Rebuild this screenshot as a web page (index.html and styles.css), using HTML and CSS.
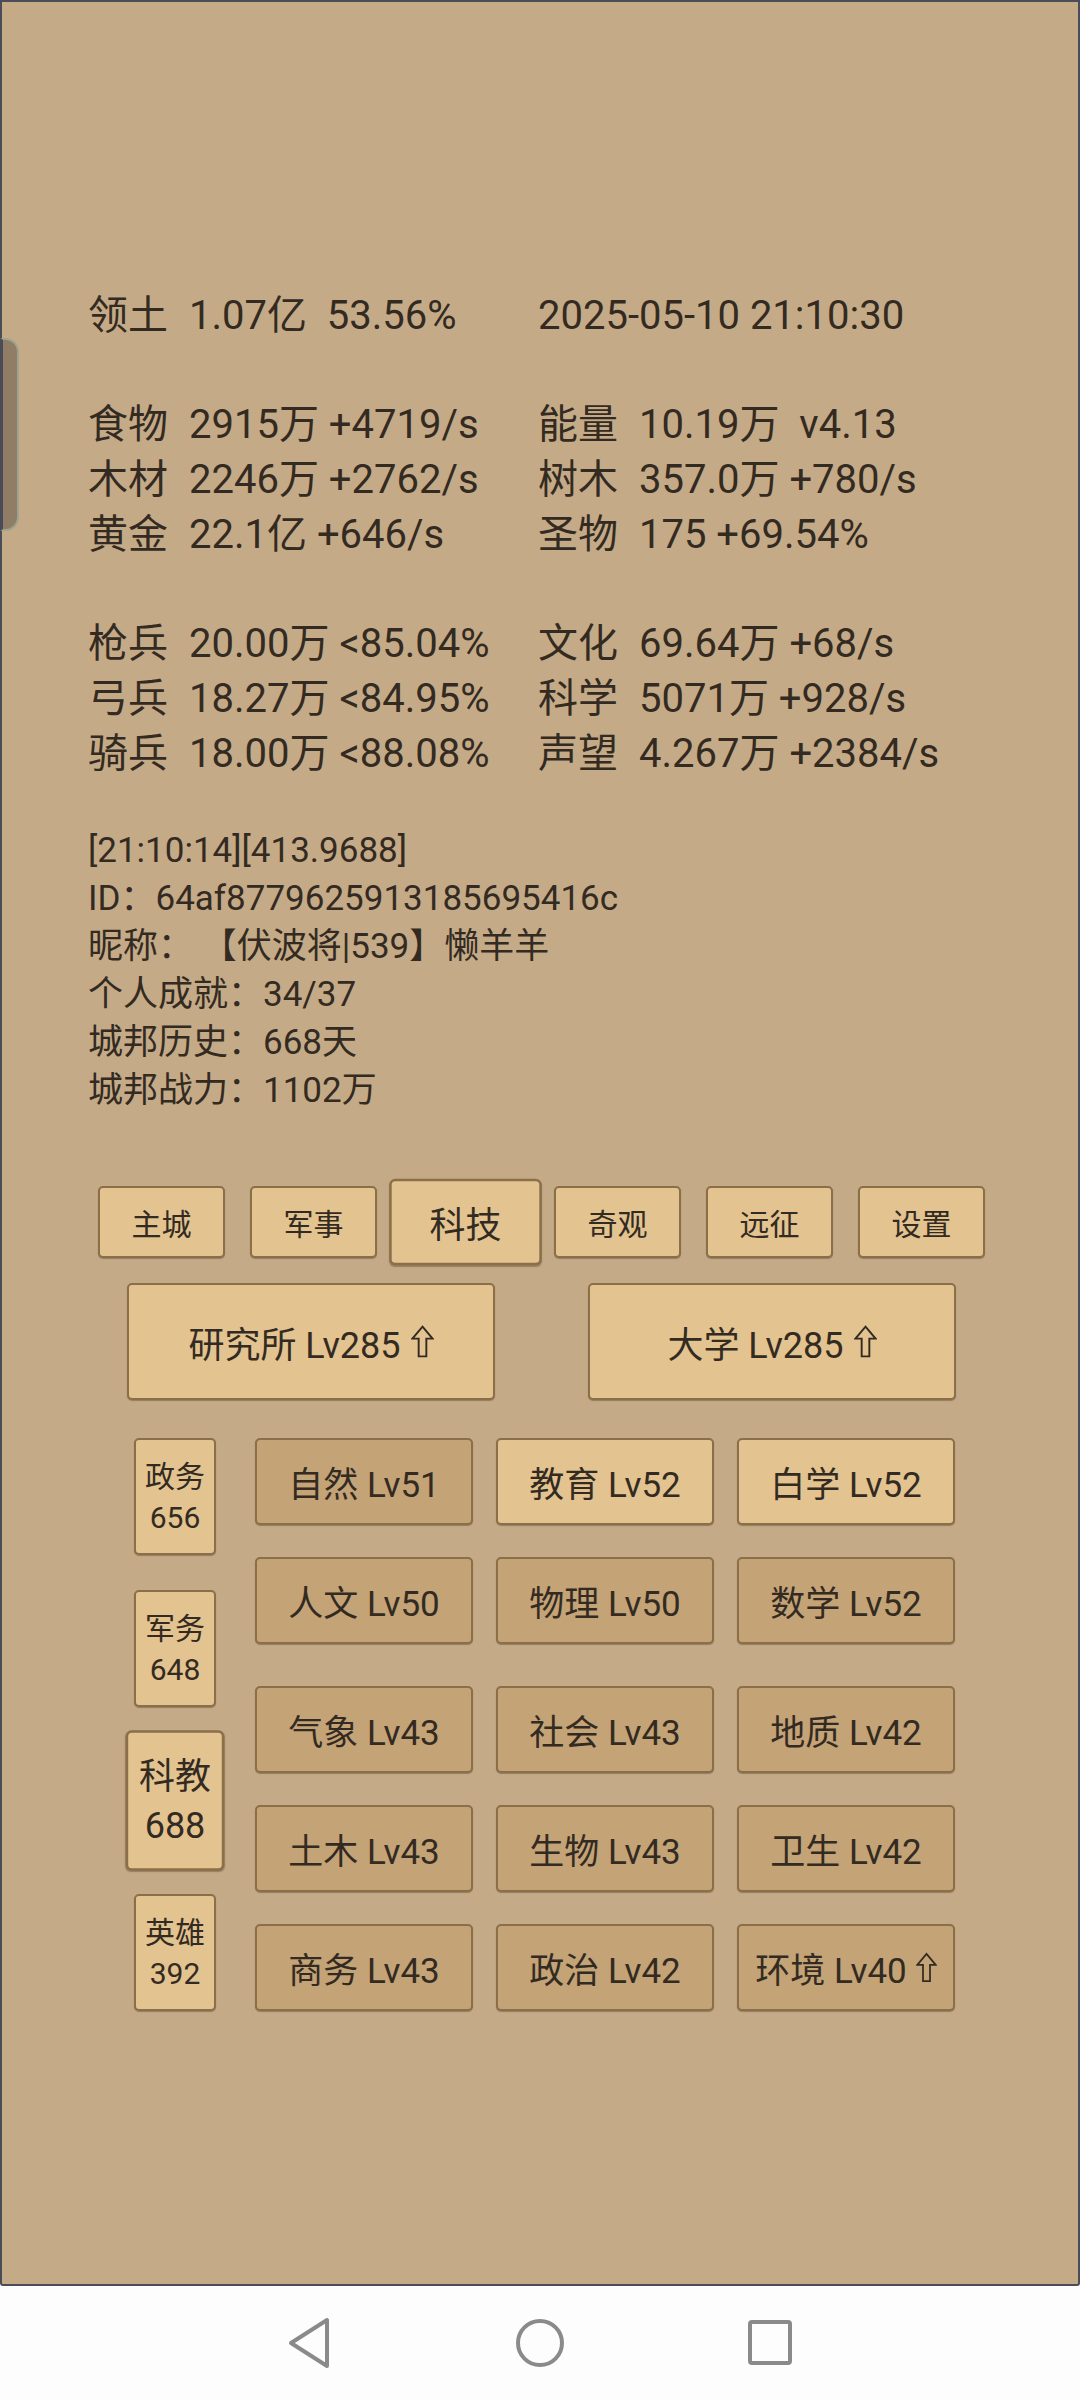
FILE: index.html
```html
<!DOCTYPE html>
<html lang="zh-CN">
<head>
    <meta charset="UTF-8">
    <meta name="viewport" content="width=device-width, initial-scale=1.0">
    <title>城邦 - 科技</title>
    <link rel="stylesheet" href="styles.css">
</head>
<body>
    <div class="panel">
        <div class="handle"></div>

        <div class="stats">
            <div class="stat-row">
                <span>领土</span><span class="pre">1.07亿  53.56%</span><span class="wide">2025-05-10 21:10:30</span>
            </div>
        </div>

        <div class="stats">
            <div class="stat-row">
                <span>食物</span><span>2915万 +4719/s</span><span>能量</span><span class="pre">10.19万  v4.13</span>
            </div>
            <div class="stat-row">
                <span>木材</span><span>2246万 +2762/s</span><span>树木</span><span>357.0万 +780/s</span>
            </div>
            <div class="stat-row">
                <span>黄金</span><span>22.1亿 +646/s</span><span>圣物</span><span>175 +69.54%</span>
            </div>
        </div>

        <div class="stats">
            <div class="stat-row">
                <span>枪兵</span><span>20.00万 &lt;85.04%</span><span>文化</span><span>69.64万 +68/s</span>
            </div>
            <div class="stat-row">
                <span>弓兵</span><span>18.27万 &lt;84.95%</span><span>科学</span><span>5071万 +928/s</span>
            </div>
            <div class="stat-row">
                <span>骑兵</span><span>18.00万 &lt;88.08%</span><span>声望</span><span>4.267万 +2384/s</span>
            </div>
        </div>

        <div class="info">
            <div>[21:10:14][413.9688]</div>
            <div>ID：64af8779625913185695416c</div>
            <div>昵称： 【伏波将|539】懒羊羊</div>
            <div>个人成就：34/37</div>
            <div>城邦历史：668天</div>
            <div>城邦战力：1102万</div>
        </div>

        <div class="tabs">
            <div class="btn tab">主城</div>
            <div class="btn tab">军事</div>
            <div class="btn tab active">科技</div>
            <div class="btn tab">奇观</div>
            <div class="btn tab">远征</div>
            <div class="btn tab">设置</div>
        </div>

        <div class="buildings">
            <div class="btn building">研究所 Lv285 <svg class="up" viewBox="0 0 24 34"><path d="M12 1.5 L22.5 14 L16 14 L16 32.5 L8 32.5 L8 14 L1.5 14 Z"/></svg></div>
            <div class="btn building">大学 Lv285 <svg class="up" viewBox="0 0 24 34"><path d="M12 1.5 L22.5 14 L16 14 L16 32.5 L8 32.5 L8 14 L1.5 14 Z"/></svg></div>
        </div>

        <div class="tech">
            <div class="cats">
                <div class="btn cat">政务<br>656</div>
                <div class="btn cat">军务<br>648</div>
                <div class="btn cat active">科教<br>688</div>
                <div class="btn cat">英雄<br>392</div>
            </div>
            <div class="tech-grid">
                <div class="tech-row">
                    <div class="btn item">自然 Lv51</div>
                    <div class="btn item ready">教育 Lv52</div>
                    <div class="btn item ready">白学 Lv52</div>
                </div>
                <div class="tech-row spaced">
                    <div class="btn item">人文 Lv50</div>
                    <div class="btn item">物理 Lv50</div>
                    <div class="btn item">数学 Lv52</div>
                </div>
                <div class="tech-row">
                    <div class="btn item">气象 Lv43</div>
                    <div class="btn item">社会 Lv43</div>
                    <div class="btn item">地质 Lv42</div>
                </div>
                <div class="tech-row">
                    <div class="btn item">土木 Lv43</div>
                    <div class="btn item">生物 Lv43</div>
                    <div class="btn item">卫生 Lv42</div>
                </div>
                <div class="tech-row">
                    <div class="btn item">商务 Lv43</div>
                    <div class="btn item">政治 Lv42</div>
                    <div class="btn item">环境 Lv40 <svg class="up small" viewBox="0 0 24 34"><path d="M12 1.5 L22.5 14 L16 14 L16 32.5 L8 32.5 L8 14 L1.5 14 Z"/></svg></div>
                </div>
            </div>
        </div>
    </div>

    <!-- 系统导航栏 -->
    <div class="navbar">
        <svg class="nav-icon" viewBox="0 0 48 52"><path d="M41 3 L41 49 L5 26 Z"/></svg>
        <svg class="nav-icon" viewBox="0 0 48 52"><circle cx="24" cy="26" r="22"/></svg>
        <svg class="nav-icon" viewBox="0 0 48 52"><rect x="4" y="5" width="40" height="41" rx="2"/></svg>
    </div>
</body>
</html>
```

FILE: styles.css
```css
body {
    margin: 0;
    padding: 0;
    width: 1080px;
    height: 2400px;
    font-family: Roboto, "Noto Sans CJK SC", sans-serif;
    color: #332b22;
    background-color: #fdfdfd;
    overflow: hidden;
}

.panel {
    position: relative;
    box-sizing: border-box;
    height: 2286px;
    padding: 286px 0 0 86px;
    background-color: #c5aa87;
    border: 2px solid #4a4d57;
    border-radius: 0 0 3px 3px;
}

.handle {
    position: absolute;
    left: -2px;
    top: 336px;
    width: 14px;
    height: 189px;
    background-color: #8f7d66;
    border: 2px solid #9fa28f;
    border-left: 3px solid #4a4d57;
    border-radius: 0 14px 14px 0;
}

.stats {
    margin-bottom: 54px;
}

.stat-row {
    display: grid;
    grid-template-columns: 101px 349px 101px auto;
    height: 55px;
    line-height: 55px;
    font-size: 40px;
}

.pre {
    white-space: pre;
}

.wide {
    grid-column: 3 / 5;
}

.info {
    margin-top: -8px;
    font-size: 35px;
    line-height: 48px;
}

.btn {
    display: flex;
    align-items: center;
    justify-content: center;
    box-sizing: border-box;
    background-color: #e3c390;
    border: 2px solid #8b6f48;
    border-radius: 5px;
    box-shadow: 0 1px 1px rgba(60, 40, 20, 0.35);
    white-space: nowrap;
}

.tabs {
    display: flex;
    gap: 25px;
    margin-top: 71px;
    padding-left: 10px;
}

.tab {
    width: 127px;
    height: 72px;
    font-size: 30px;
}

.tab.active,
.cat.active {
    transform: scale(1.2);
}

.buildings {
    display: flex;
    gap: 93px;
    margin-top: 25px;
    padding-left: 39px;
}

.building {
    width: 368px;
    height: 117px;
    font-size: 36px;
}

.up {
    width: 23px;
    height: 33px;
    margin-left: 10px;
    fill: none;
    stroke: #332b22;
    stroke-width: 2;
}

.up.small {
    width: 21px;
    height: 31px;
    margin-left: 9px;
}

.tech {
    display: flex;
    margin-top: 38px;
    padding-left: 46px;
}

.cats {
    display: flex;
    flex-direction: column;
    gap: 35px;
    width: 82px;
    margin-right: 39px;
}

.cat {
    height: 117px;
    font-size: 30px;
    line-height: 41px;
    text-align: center;
    white-space: normal;
}

.tech-row {
    display: flex;
    gap: 23px;
    margin-bottom: 32px;
}

.tech-row.spaced {
    margin-bottom: 42px;
}

.item {
    width: 218px;
    height: 87px;
    font-size: 35px;
    background-color: #c4a376;
}

.item.ready {
    background-color: #e3c390;
}

.navbar {
    display: flex;
    align-items: center;
    justify-content: center;
    gap: 182px;
    height: 114px;
    background-color: #fdfdfd;
}

.nav-icon {
    width: 48px;
    height: 52px;
    fill: none;
    stroke: #8a8a8a;
    stroke-width: 4;
    stroke-linejoin: round;
}
```
